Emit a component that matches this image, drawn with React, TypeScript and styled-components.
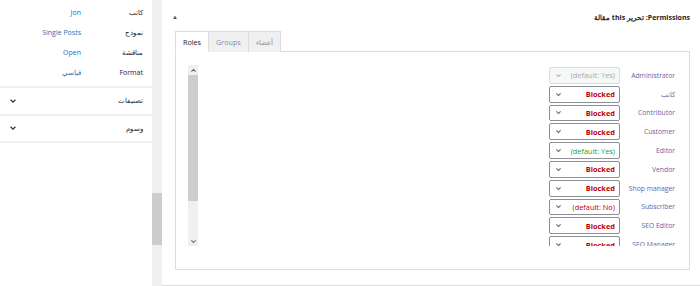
import React from "react";
import styled, { createGlobalStyle } from "styled-components";

const GlobalStyle = createGlobalStyle`
  *, *::before, *::after {
    box-sizing: border-box;
  }
  body {
    margin: 0;
    font-family: "Open Sans", "Noto Sans", sans-serif;
    background: #ffffff;
  }
`;

type Role = { name: string; value: string; kind: "blocked" | "yes" | "no" | "disabled" };

const roles: Role[] = [
  { name: "Administrator", value: "(default: Yes)", kind: "disabled" },
  { name: "كاتب", value: "Blocked", kind: "blocked" },
  { name: "Contributor", value: "Blocked", kind: "blocked" },
  { name: "Customer", value: "Blocked", kind: "blocked" },
  { name: "Editor", value: "(default: Yes)", kind: "yes" },
  { name: "Vendor", value: "Blocked", kind: "blocked" },
  { name: "Shop manager", value: "Blocked", kind: "blocked" },
  { name: "Subscriber", value: "(default: No)", kind: "no" },
  { name: "SEO Editor", value: "Blocked", kind: "blocked" },
  { name: "SEO Manager", value: "Blocked", kind: "blocked" },
];

const meta = [
  { label: "كاتب", value: "Jon" },
  { label: "نموذج", value: "Single Posts" },
  { label: "مناقشة", value: "Open" },
  { label: "Format", value: "قياسي" },
];

const Chevron = ({ up = false, size = 7, color = "#555" }: { up?: boolean; size?: number; color?: string }) => (
  <svg width={size} height={size} viewBox="0 0 10 10">
    <path
      d={up ? "M2 6.5 L5 3.5 L8 6.5" : "M2 3.5 L5 6.5 L8 3.5"}
      fill="none"
      stroke={color}
      strokeWidth="1.6"
    />
  </svg>
);

const App = () => {
  return (
    <>
      <GlobalStyle />
      <Page>
        <Sidebar>
          <MetaList>
            {meta.map((m) => (
              <MetaRow key={m.label}>
                <MetaValue>{m.value}</MetaValue>
                <MetaLabel>{m.label}</MetaLabel>
              </MetaRow>
            ))}
          </MetaList>
          <Section>
            <Chevron size={8} color="#333" />
            <SectionTitle>تصنيفات</SectionTitle>
          </Section>
          <Section>
            <Chevron size={8} color="#333" />
            <SectionTitle>وسوم</SectionTitle>
          </Section>
        </Sidebar>
        <PageScroll>
          <PageThumb />
        </PageScroll>
        <Main>
          <Header>
            <Toggle>▲</Toggle>
            <Title dir="rtl">Permissions: تحرير this مقالة</Title>
          </Header>
          <Tabs>
            <Tab $active>Roles</Tab>
            <Tab>Groups</Tab>
            <Tab>أعضاء</Tab>
          </Tabs>
          <Panel>
            <ListBox>
              <InnerScroll>
                <ArrowBox>
                  <Chevron up size={7} color="#666" />
                </ArrowBox>
                <InnerThumb />
                <TrackRest />
                <ArrowBox>
                  <Chevron size={7} color="#666" />
                </ArrowBox>
              </InnerScroll>
              <Rows>
                {roles.map((r) => (
                  <RoleRow key={r.name}>
                    <Select $disabled={r.kind === "disabled"}>
                      <Chevron size={7} color={r.kind === "disabled" ? "#b5b5b5" : "#666"} />
                      <SelectValue $kind={r.kind}>{r.value}</SelectValue>
                    </Select>
                    <RoleName>{r.name}</RoleName>
                  </RoleRow>
                ))}
              </Rows>
            </ListBox>
          </Panel>
        </Main>
      </Page>
    </>
  );
};

export default App;

const Page = styled.div`
  width: 700px;
  height: 286px;
  display: flex;
  overflow: hidden;
`;

const Sidebar = styled.div`
  width: 152px;
  flex-shrink: 0;
  display: flex;
  flex-direction: column;
`;

const MetaList = styled.div`
  padding: 2px 0 4px;
  border-bottom: 2px solid #f0f0f0;
`;

const MetaRow = styled.div`
  height: 20px;
  display: flex;
  align-items: center;
  font-size: 7px;
`;

const MetaValue = styled.div`
  width: 81px;
  text-align: right;
  color: #2271b1;
`;

const MetaLabel = styled.div`
  width: 62px;
  text-align: right;
  color: #1d2327;
`;

const Section = styled.div`
  height: 27.5px;
  display: flex;
  align-items: center;
  justify-content: space-between;
  padding: 0 9px 0 9px;
  border-bottom: 2px solid #f0f0f0;
`;

const SectionTitle = styled.span`
  font-size: 6.5px;
  color: #1d2327;
`;

const PageScroll = styled.div`
  width: 10px;
  flex-shrink: 0;
  background: #f0f0f0;
  display: flex;
  flex-direction: column;
  padding-top: 193px;
`;

const PageThumb = styled.div`
  height: 52px;
  background: #cdcdcd;
`;

const Main = styled.div`
  flex: 1;
  border-bottom: 1px solid #dcdcde;
  padding: 9px 10px 0 13px;
`;

const Header = styled.div`
  height: 16px;
  display: flex;
  align-items: center;
  justify-content: space-between;
`;

const Toggle = styled.span`
  font-size: 6px;
  color: #555;
  margin-left: -3px;
`;

const Title = styled.span`
  font-size: 7px;
  font-weight: 700;
  color: #1d2327;
`;

const Tabs = styled.div`
  display: flex;
  margin-top: 6px;
`;

const Tab = styled.div<{ $active?: boolean }>`
  height: 21px;
  padding: 0 7px;
  display: flex;
  align-items: center;
  font-size: 7.2px;
  border: 1px solid #dcdcde;
  border-left: none;
  border-bottom: ${(p) => (p.$active ? "1px solid #fff" : "none")};
  background: ${(p) => (p.$active ? "#fff" : "#f0f0f1")};
  color: ${(p) => (p.$active ? "#1d2327" : "#8c8f94")};
  margin-bottom: -1px;
  position: relative;
  &:first-child {
    border-left: 1px solid #dcdcde;
  }
`;

const Panel = styled.div`
  height: 219px;
  border: 1px solid #dcdcde;
  padding: 13px 10px 0 12px;
`;

const ListBox = styled.div`
  height: 181px;
  display: flex;
  overflow: hidden;
`;

const InnerScroll = styled.div`
  width: 10px;
  flex-shrink: 0;
  display: flex;
  flex-direction: column;
  background: #f0f0f0;
`;

const ArrowBox = styled.div`
  height: 10px;
  flex-shrink: 0;
  display: flex;
  align-items: center;
  justify-content: center;
`;

const InnerThumb = styled.div`
  height: 126px;
  background: #cdcdcd;
`;

const TrackRest = styled.div`
  flex: 1;
`;

const Rows = styled.div`
  flex: 1;
  display: flex;
  flex-direction: column;
  gap: 2px;
  padding-top: 2px;
`;

const RoleRow = styled.div`
  height: 16.8px;
  flex-shrink: 0;
  display: flex;
  align-items: center;
  justify-content: flex-end;
`;

const Select = styled.div<{ $disabled?: boolean }>`
  width: 71px;
  height: 100%;
  border: 1px solid ${(p) => (p.$disabled ? "#dcdcde" : "#8c8f94")};
  background: ${(p) => (p.$disabled ? "#f6f7f7" : "#fff")};
  border-radius: 2px;
  display: flex;
  align-items: center;
  justify-content: space-between;
  padding: 0 4px 0 5px;
`;

const kindColor = {
  blocked: "#c00000",
  yes: "#22a022",
  no: "#c00000",
  disabled: "#a7aaad",
};

const SelectValue = styled.span<{ $kind: Role["kind"] }>`
  font-size: 7.4px;
  font-weight: ${(p) => (p.$kind === "blocked" ? 700 : 400)};
  color: ${(p) => kindColor[p.$kind]};
`;

const RoleName = styled.div`
  width: 59px;
  padding-right: 4px;
  text-align: right;
  font-size: 6.8px;
  color: #6c62a8;
  white-space: nowrap;
`;
